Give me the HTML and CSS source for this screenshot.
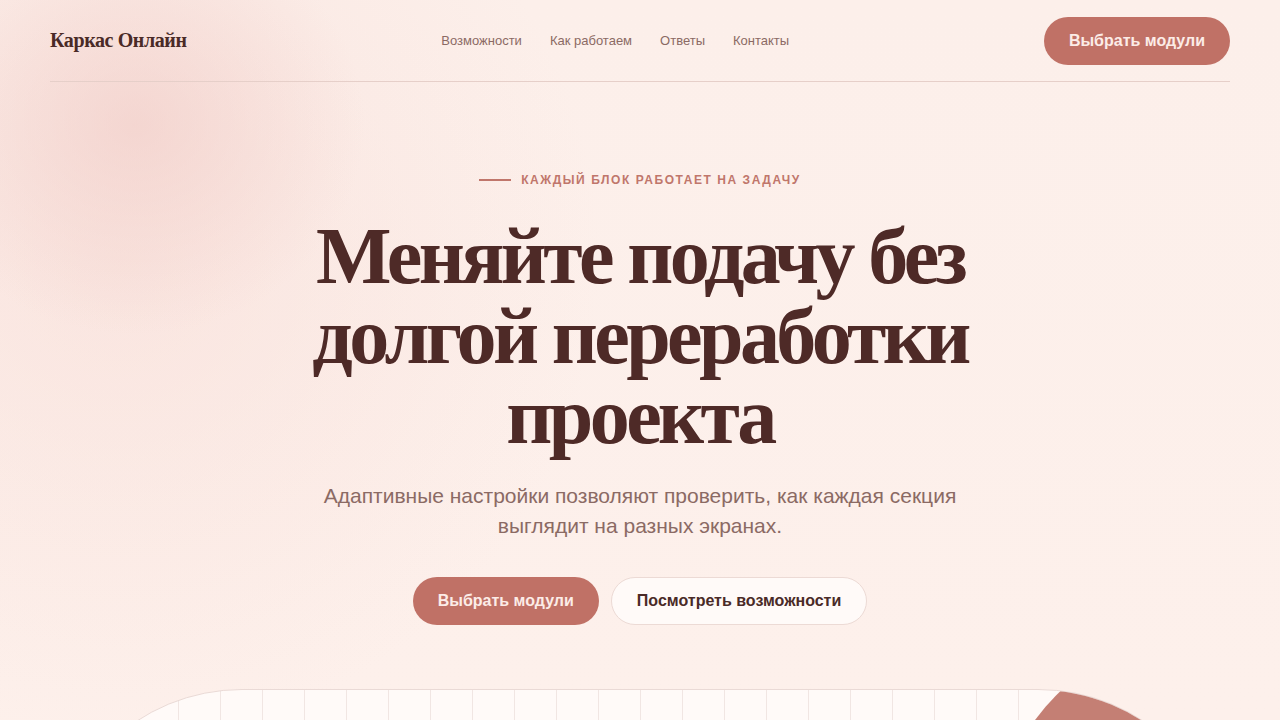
FILE: index.html
```html
<!DOCTYPE html>
<html lang="ru">
<head>
<meta charset="utf-8">
<title>Каркас Онлайн</title>
<link rel="stylesheet" href="styles.css">
</head>
<body>
<div class="page">
  <header class="header">
    <a class="logo" href="#">Каркас Онлайн</a>
    <nav class="nav">
      <a href="#">Возможности</a>
      <a href="#">Как работаем</a>
      <a href="#">Ответы</a>
      <a href="#">Контакты</a>
    </nav>
    <a class="btn btn-primary" href="#">Выбрать модули</a>
  </header>

  <section class="hero">
    <div class="eyebrow"><span class="eyebrow-line"></span>Каждый блок работает на задачу</div>
    <h1 class="title">Меняйте подачу без долгой переработки проекта</h1>
    <p class="lead">Адаптивные настройки позволяют проверить, как каждая секция выглядит на разных экранах.</p>
    <div class="actions">
      <a class="btn btn-primary" href="#">Выбрать модули</a>
      <a class="btn btn-ghost" href="#">Посмотреть возможности</a>
    </div>
  </section>

  <section class="preview">
    <div class="board">
      <div class="blob"></div>
    </div>
  </section>
</div>
</body>
</html>
```

FILE: styles.css
```css
* { box-sizing: border-box; }
html, body { margin: 0; padding: 0; }
body {
  font-family: "Liberation Sans", Arial, sans-serif;
  background: #fdf1ec;
  overflow: hidden;
}
.page {
  display: flex;
  flex-direction: column;
  height: 720px;
  padding: 0 50px;
  overflow: hidden;
  background:
    radial-gradient(ellipse 230px 210px at 135px 125px, rgba(240, 202, 197, 0.6), rgba(240, 202, 197, 0) 100%),
    radial-gradient(ellipse 480px 480px at 120px 260px, rgba(246, 216, 210, 0.45), rgba(246, 216, 210, 0) 100%),
    linear-gradient(180deg, #fcefea 0%, #fdf0eb 100%);
}
a { text-decoration: none; }

.header {
  flex: none;
  display: flex;
  align-items: center;
  justify-content: space-between;
  height: 82px;
  border-bottom: 1px solid #e6cfc9;
}
.logo {
  font-family: "Liberation Serif", "Times New Roman", serif;
  font-weight: 700;
  font-size: 20px;
  letter-spacing: -0.02em;
  color: #4a2a27;
}
.nav {
  display: flex;
  gap: 28px;
}
.nav a {
  font-size: 13px;
  color: #8b6a64;
}
.btn {
  display: inline-flex;
  align-items: center;
  justify-content: center;
  height: 48px;
  padding: 0 25px;
  border-radius: 999px;
  font-size: 16px;
  font-weight: 700;
}
.btn-primary {
  background: #c07166;
  color: #fcece7;
}
.btn-ghost {
  background: #fffaf8;
  border: 1px solid #ecdad5;
  color: #4a2a27;
}

.hero {
  flex: none;
  display: flex;
  flex-direction: column;
  align-items: center;
  text-align: center;
  padding-top: 91px;
}
.eyebrow {
  display: flex;
  align-items: center;
  gap: 10px;
  font-size: 12px;
  font-weight: 700;
  letter-spacing: 0.13em;
  text-transform: uppercase;
  color: #c0766b;
  line-height: 14px;
}
.eyebrow-line {
  display: block;
  width: 32px;
  height: 2px;
  background: #c0766b;
}
.title {
  margin: 29px 0 0;
  max-width: 700px;
  font-family: "Liberation Serif", "Times New Roman", serif;
  font-weight: 700;
  font-size: 80px;
  line-height: 80px;
  letter-spacing: -0.045em;
  color: #4e2a27;
}
.lead {
  margin: 25px 0 0;
  max-width: 660px;
  font-size: 21px;
  line-height: 30px;
  color: #8b6a64;
}
.actions {
  display: flex;
  gap: 12px;
  margin-top: 36px;
}

.preview {
  flex: 1;
  margin-top: 64px;
  overflow: hidden;
}
.board {
  position: relative;
  height: 320px;
  border: 1px solid #eadad6;
  border-radius: 192px 192px 0 0;
  overflow: hidden;
  background-color: #fffaf8;
  background-image: linear-gradient(to right, #f1e6e3 1px, transparent 1px);
  background-size: 42px 100%;
  background-position: 1px 0;
}
.blob {
  position: absolute;
  left: 945px;
  top: -54px;
  width: 408px;
  height: 408px;
  border-radius: 50%;
  background: #c47f74;
}
```
